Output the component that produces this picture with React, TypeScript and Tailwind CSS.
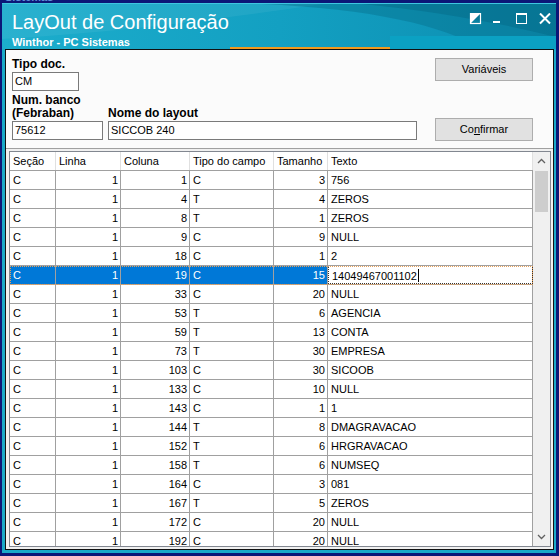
const rows = [
  ["C", "1", "1", "C", "3", "756"],
  ["C", "1", "4", "T", "4", "ZEROS"],
  ["C", "1", "8", "T", "1", "ZEROS"],
  ["C", "1", "9", "C", "9", "NULL"],
  ["C", "1", "18", "C", "1", "2"],
  ["C", "1", "19", "C", "15", "14049467001102"],
  ["C", "1", "33", "C", "20", "NULL"],
  ["C", "1", "53", "T", "6", "AGENCIA"],
  ["C", "1", "59", "T", "13", "CONTA"],
  ["C", "1", "73", "T", "30", "EMPRESA"],
  ["C", "1", "103", "C", "30", "SICOOB"],
  ["C", "1", "133", "C", "10", "NULL"],
  ["C", "1", "143", "C", "1", "1"],
  ["C", "1", "144", "T", "8", "DMAGRAVACAO"],
  ["C", "1", "152", "T", "6", "HRGRAVACAO"],
  ["C", "1", "158", "T", "6", "NUMSEQ"],
  ["C", "1", "164", "C", "3", "081"],
  ["C", "1", "167", "T", "5", "ZEROS"],
  ["C", "1", "172", "C", "20", "NULL"],
  ["C", "1", "192", "C", "20", "NULL"],
];

const selected = 5;

const cols = [
  { label: "Seção", w: "w-[46px]", num: false },
  { label: "Linha", w: "w-[65px]", num: true },
  { label: "Coluna", w: "w-[69px]", num: true },
  { label: "Tipo do campo", w: "w-[84px]", num: false },
  { label: "Tamanho", w: "w-[54px]", num: true },
  { label: "Texto", w: "w-[205px]", num: false },
];

function TitleBackground() {
  return (
    <svg className="absolute inset-0" width="554" height="46" viewBox="0 0 554 46">
      <defs>
        <linearGradient id="tb" x1="0" y1="0" x2="1" y2="0">
          <stop offset="0" stopColor="#1cadcc" />
          <stop offset="0.5" stopColor="#13a0c2" />
          <stop offset="1" stopColor="#0c8db0" />
        </linearGradient>
      </defs>
      <rect width="554" height="46" fill="url(#tb)" />
      <rect width="554" height="1" fill="#3ec6e0" />
      <path d="M0,1 L320,1 C220,16 110,30 0,36 Z" fill="#ffffff" opacity="0.06" />
      <path d="M260,1 C370,6 440,22 480,46 L554,46 L554,1 Z" fill="#06708f" opacity="0.45" />
      <path d="M360,1 C430,8 500,20 554,34 L554,1 Z" fill="#04607e" opacity="0.35" />
      <rect x="388" y="33" width="166" height="13" fill="#0ba1c3" />
      <rect x="228" y="44" width="160" height="2" fill="#f19a1f" />
    </svg>
  );
}

function WindowButtons() {
  return (
    <svg width="82" height="12" viewBox="0 0 82 12" className="relative">
      <rect x="1.5" y="0.5" width="10" height="10" fill="none" stroke="#fff" strokeWidth="1.2" />
      <polygon points="1,0 12,0 1,11" fill="#fff" />
      <rect x="24" y="8" width="7" height="2" fill="#fff" />
      <rect x="47.5" y="0.5" width="10" height="10" fill="none" stroke="#fff" strokeWidth="1" />
      <rect x="47" y="0" width="11" height="2" fill="#fff" />
      <path d="M71,0.5 L81,10.5 M81,0.5 L71,10.5" stroke="#fff" strokeWidth="2" />
    </svg>
  );
}

function Field({ value, width }: { value: string; width: string }) {
  return (
    <div className={`${width} h-[19px] border border-[#7a7a7a] bg-white pl-[2px] leading-[17px]`}>
      {value}
    </div>
  );
}

function Button({ children }: { children: React.ReactNode }) {
  return (
    <div className="flex h-[23px] w-[98px] items-center justify-center border border-[#adadad] bg-[#e1e1e1]">
      {children}
    </div>
  );
}

export default function App() {
  return (
    <div className="flex h-[556px] w-[559px] flex-col overflow-hidden bg-[#0b1677] pb-[3px] pl-[2px] pr-[3px] font-['Liberation_Sans',Arial,sans-serif] text-[11px] text-black">
      <div className="h-[3px] overflow-hidden pl-[3px]">
        <span className="-mt-[9px] block text-[11px] font-bold leading-[12px] text-[#5d8fd6]">Sistemas</span>
      </div>

      <div className="flex flex-1 flex-col bg-[#1aa9c8]">
        {/* title bar */}
        <div className="relative flex h-[46px] justify-between pl-[10px] pr-[5px] text-white">
          <TitleBackground />
          <div className="relative pt-[8px]">
            <div className="text-[20px] leading-[23px]">LayOut de Configuração</div>
            <div className="mt-[2px] text-[11px] font-bold leading-[13px]">Winthor - PC Sistemas</div>
          </div>
          <div className="relative pt-[10px]">
            <WindowButtons />
          </div>
        </div>

        <div className="flex flex-1 flex-col pb-[3px] pl-[3px] pr-[2px]">
          <div className="flex flex-1 flex-col border border-[#111]">
            {/* header form */}
            <div className="flex h-[99px] border-b border-[#a0a0a0] bg-[#fbfbfb] pl-[6px] pr-[20px] pt-[7px]">
              <div className="flex flex-col">
                <div className="text-[12px] font-bold leading-[14px]">Tipo doc.</div>
                <div className="mt-[1px]">
                  <Field value="CM" width="w-[67px]" />
                </div>
                <div className="mt-[3px] flex items-end gap-[5px]">
                  <div className="flex flex-col">
                    <div className="text-[12px] font-bold leading-[12px]">Num. banco</div>
                    <div className="text-[12px] font-bold leading-[14px]">(Febraban)</div>
                    <div className="mt-[1px]">
                      <Field value="75612" width="w-[91px]" />
                    </div>
                  </div>
                  <div className="flex flex-col">
                    <div className="text-[12px] font-bold leading-[14px]">Nome do layout</div>
                    <div className="mt-[1px]">
                      <Field value="SICCOB 240" width="w-[309px]" />
                    </div>
                  </div>
                </div>
              </div>
              <div className="ml-auto flex flex-col pt-[1px]">
                <Button>Variáveis</Button>
                <div className="mt-[37px]">
                  <Button>
                    <span>
                      Co<span className="underline">n</span>firmar
                    </span>
                  </Button>
                </div>
              </div>
            </div>

            {/* grid */}
            <div className="flex-1 bg-[#f0f0f0] pl-[3px] pr-[2px] pt-[2px]">
              <div className="flex h-[396px] w-[542px] border border-[#828790] bg-white">
                <div className="flex w-[523px] flex-col overflow-hidden">
                  <div className="flex h-[19px] shrink-0 border-b border-[#a0a0a0] bg-white">
                    {cols.map((c) => (
                      <div key={c.label} className={`${c.w} shrink-0 border-r border-[#e0e0e0] pl-[3px] leading-[18px]`}>
                        {c.label}
                      </div>
                    ))}
                  </div>
                  {rows.map((r, i) => {
                    const sel = i === selected;
                    return (
                      <div
                        key={i}
                        className={
                          sel
                            ? "flex h-[19px] shrink-0 border-b border-[#a0a0a0] bg-[#0078d7] text-white outline-1 -outline-offset-1 outline-dotted outline-[#e9a15a]"
                            : "flex h-[19px] shrink-0 border-b border-[#a0a0a0]"
                        }
                      >
                        {r.map((v, j) => {
                          const c = cols[j];
                          if (sel && j === 5) {
                            return (
                              <div key={j} className={`${c.w} shrink-0 border border-dotted border-[#333] bg-white pl-[3px] leading-[16px] text-black`}>
                                {v}
                                <span className="ml-[1px] inline-block h-[13px] w-[1px] translate-y-[2px] bg-black" />
                              </div>
                            );
                          }
                          return (
                            <div
                              key={j}
                              className={`${c.w} shrink-0 border-r border-[#a0a0a0] leading-[18px] ${c.num ? "pr-[2px] text-right" : "pl-[3px]"}`}
                            >
                              {v}
                            </div>
                          );
                        })}
                      </div>
                    );
                  })}
                </div>

                {/* vertical scrollbar */}
                <div className="flex w-[17px] flex-col bg-[#f0f0f0]">
                  <div className="flex h-[18px] items-center justify-center">
                    <svg width="9" height="6" viewBox="0 0 9 6">
                      <path d="M1,5 L4.5,1.5 L8,5" fill="none" stroke="#606060" strokeWidth="1.3" />
                    </svg>
                  </div>
                  <div className="mx-[2px] mt-[1px] h-[41px] bg-[#cdcdcd]" />
                  <div className="flex-1" />
                  <div className="flex h-[18px] items-center justify-center">
                    <svg width="9" height="6" viewBox="0 0 9 6">
                      <path d="M1,1 L4.5,4.5 L8,1" fill="none" stroke="#606060" strokeWidth="1.3" />
                    </svg>
                  </div>
                </div>
              </div>
            </div>
          </div>
        </div>
      </div>
    </div>
  );
}
